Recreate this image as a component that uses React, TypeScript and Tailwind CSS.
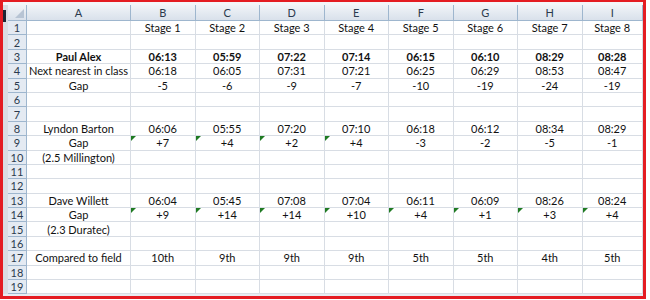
import React from "react"

const cols = ["A", "B", "C", "D", "E", "F", "G", "H", "I"]

type Row = { label?: string; values?: string[]; bold?: boolean; flags?: boolean[] }

const rows: Row[] = [
    { values: ["Stage 1", "Stage 2", "Stage 3", "Stage 4", "Stage 5", "Stage 6", "Stage 7", "Stage 8"] },
    {},
    { label: "Paul Alex", bold: true, values: ["06:13", "05:59", "07:22", "07:14", "06:15", "06:10", "08:29", "08:28"] },
    { label: "Next nearest in class", values: ["06:18", "06:05", "07:31", "07:21", "06:25", "06:29", "08:53", "08:47"] },
    { label: "Gap", values: ["-5", "-6", "-9", "-7", "-10", "-19", "-24", "-19"] },
    {},
    {},
    { label: "Lyndon Barton", values: ["06:06", "05:55", "07:20", "07:10", "06:18", "06:12", "08:34", "08:29"] },
    {
        label: "Gap",
        values: ["+7", "+4", "+2", "+4", "-3", "-2", "-5", "-1"],
        flags: [true, true, true, true, false, false, false, false]
    },
    { label: "(2.5 Millington)" },
    {},
    {},
    { label: "Dave Willett", values: ["06:04", "05:45", "07:08", "07:04", "06:11", "06:09", "08:26", "08:24"] },
    {
        label: "Gap",
        values: ["+9", "+14", "+14", "+10", "+4", "+1", "+3", "+4"],
        flags: [true, true, true, true, true, true, true, true]
    },
    { label: "(2.3 Duratec)" },
    {},
    { label: "Compared to field", values: ["10th", "9th", "9th", "9th", "5th", "5th", "4th", "5th"] },
    {},
    {}
]

function Flag() {
    return (
        <svg className="absolute left-0 top-0" width="5" height="5" viewBox="0 0 5 5">
            <polygon points="0,0 5,0 0,5" fill="#1f7a22" />
        </svg>
    )
}

export default function App() {
    return (
        <div className="h-[300px] w-[650px] bg-white" style={{ fontFamily: "Lato, 'Open Sans', sans-serif" }}>
            <div className="flex h-[299px] w-[646px] flex-col border-y-2 border-l-[3px] border-r-[3px] border-b-[3px] border-[#e41c22] bg-[#e8ecf1]">
                <div className="h-[3px] bg-[#f4f6f9]" />
                <div className="flex">
                    <div className="relative w-[5px] bg-[#d9dde3]">
                        <div className="absolute left-0 top-[5px] h-[12px] w-[3px] bg-[#1d2633]" />
                    </div>
                    <div className="grid grid-cols-[19px_104px_repeat(7,64.5px)_60.5px] grid-rows-[16px_repeat(19,14.4px)] bg-white text-[11px] leading-none text-[#111]">
                        <div className="relative border-b border-r border-[#9eb6ce] bg-gradient-to-b from-[#f1f4f8] to-[#d9e1eb]">
                            <svg className="absolute bottom-[2px] right-[2px]" width="9" height="9" viewBox="0 0 9 9">
                                <polygon points="9,0 9,9 0,9" fill="#b7c4d4" />
                            </svg>
                        </div>
                        {cols.map((c) => (
                            <div
                                key={c}
                                className="flex items-center justify-center border-b border-r border-[#9eb6ce] bg-gradient-to-b from-[#f1f4f8] to-[#d9e1eb] text-[#2b3a4d]"
                            >
                                {c}
                            </div>
                        ))}
                        {rows.map((r, i) => (
                            <React.Fragment key={i}>
                                <div className="flex items-center justify-center border-b border-r border-[#9eb6ce] bg-[#e4eaf2] text-[#2b3a4d]">
                                    {i + 1}
                                </div>
                                <div
                                    className={`flex items-center justify-center border-b border-r border-[#d8dde4] ${r.bold ? "font-bold" : ""}`}
                                >
                                    {r.label}
                                </div>
                                {Array.from({ length: 8 }).map((_, j) => (
                                    <div
                                        key={j}
                                        className={`relative flex items-center justify-center border-b border-r border-[#d8dde4] ${r.bold ? "font-bold" : ""}`}
                                    >
                                        {r.flags?.[j] && <Flag />}
                                        {r.values?.[j]}
                                    </div>
                                ))}
                            </React.Fragment>
                        ))}
                    </div>
                </div>
            </div>
        </div>
    )
}
